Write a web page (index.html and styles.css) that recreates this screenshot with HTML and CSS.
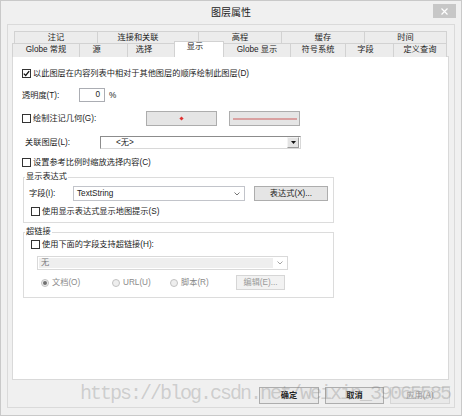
FILE: index.html
```html
<!DOCTYPE html>
<html lang="zh-CN">
<head>
<meta charset="utf-8">
<title>图层属性</title>
<link rel="stylesheet" href="styles.css">
</head>
<body>
<div class="window">
  <div class="titlebar">
    <span></span>
    <span class="title">图层属性</span>
    <span class="close"><svg width="7" height="7" viewBox="0 0 7 7"><path d="M0.5 0.5L6.5 6.5M6.5 0.5L0.5 6.5" stroke="#fff" stroke-width="1.2"/></svg></span>
  </div>
  <div class="panel">
    <div class="tabrow row1">
      <div class="tab">注记</div>
      <div class="tab shift-a">连接和关联</div>
      <div class="tab">高程</div>
      <div class="tab">缓存</div>
      <div class="tab">时间</div>
    </div>
    <div class="tabrow row2">
      <div class="tab">Globe 常规</div>
      <div class="tab shift-b">源</div>
      <div class="tab shift-b">选择</div>
      <div class="tab sel">显示</div>
      <div class="tab">Globe 显示</div>
      <div class="tab">符号系统</div>
      <div class="tab shift-c">字段</div>
      <div class="tab">定义查询</div>
    </div>
    <div class="page">
      <div class="row r1"><span class="cb on"><svg width="7" height="7" viewBox="0 0 7 7"><path d="M0.8 3.6L2.7 5.5L6.2 1.2" fill="none" stroke="#111" stroke-width="1.3"/></svg></span><span>以此图层在内容列表中相对于其他图层的顺序绘制此图层(D)</span></div>
      <div class="row r2"><span class="lbl-t">透明度(T):</span><span class="num">0</span><span class="pct">%</span></div>
      <div class="row r3"><span class="lbl-g"><span class="cb"></span><span>绘制注记几何(G):</span></span><span class="btn sym"><span class="dot"></span></span><span class="btn sym line"><span class="stroke"></span></span></div>
      <div class="row r4"><span class="lbl-l">关联图层(L):</span><span class="drop"><span class="drop-text">&lt;无&gt;</span><span class="drop-btn"><svg width="5" height="3" viewBox="0 0 5 3"><path d="M0 0H5L2.5 3Z" fill="#111"/></svg></span></span></div>
      <div class="row r5"><span class="cb"></span><span>设置参考比例时缩放选择内容(C)</span></div>
      <fieldset class="group g1">
        <legend>显示表达式</legend>
        <div class="row f1"><span class="lbl-f">字段(I):</span><span class="combo"><span class="combo-text">TextString</span><svg class="chev" width="6" height="4" viewBox="0 0 6 4"><path d="M0.5 0.5L3 3L5.5 0.5" fill="none" stroke="#666" stroke-width="0.9"/></svg></span><span class="btn expr">表达式(X)...</span></div>
        <div class="row f2"><span class="cb"></span><span>使用显示表达式显示地图提示(S)</span></div>
      </fieldset>
      <fieldset class="group g2">
        <legend>超链接</legend>
        <div class="row h1"><span class="cb"></span><span>使用下面的字段支持超链接(H):</span></div>
        <div class="row h2"><span class="combo off"><span class="combo-text">无</span><span class="combo-arrow"><svg width="6" height="4" viewBox="0 0 6 4"><path d="M0.5 0.5L3 3L5.5 0.5" fill="none" stroke="#999" stroke-width="0.9"/></svg></span></span></div>
        <div class="row h3">
          <span class="radio-item ri1"><span class="radio on"></span><span>文档(O)</span></span>
          <span class="radio-item ri2"><span class="radio"></span><span>URL(U)</span></span>
          <span class="radio-item ri3"><span class="radio"></span><span>脚本(R)</span></span>
          <span class="btn disabled edit">编辑(E)...</span>
        </div>
      </fieldset>
    </div>
    <div class="footer">
      <span class="btn foot strong">确定</span>
      <span class="btn foot strong">取消</span>
      <span class="btn foot disabled">应用(A)</span>
    </div>
  </div>
  <div class="watermark">https://blog.csdn.net/weixin_39065585</div>
</div>
</body>
</html>
```
FILE: styles.css
```css
* { box-sizing: border-box; }
body {
  margin: 0;
  background: #ffffff;
  font-family: "Liberation Sans", "Noto Sans CJK SC", sans-serif;
  font-size: 8.2px;
  line-height: 11px;
  color: #1c1c1c;
}
.window {
  position: relative;
  width: 462px;
  height: 416px;
  border: 1px solid #c9c9c9;
  background: #f0f0f0;
  overflow: hidden;
}
.titlebar {
  height: 23px;
  display: grid;
  grid-template-columns: 1fr auto 1fr;
  align-items: start;
}
.title {
  font-size: 10px;
  line-height: 12px;
  margin-top: 6px;
  color: #222;
}
.close {
  justify-self: end;
  width: 23px;
  height: 14px;
  margin-top: 3px;
  margin-right: 5px;
  background: #c7c7c7;
  display: flex;
  align-items: center;
  justify-content: center;
}
.panel {
  margin: 0 6px;
  height: 384px;
  border: 1px solid #dadada;
  padding: 6px 0 0 4px;
}
.tabrow { display: grid; }
.row1 {
  margin-left: 2px;
  height: 12px;
  grid-template-columns: 83px 101px 83px 83px 83px;
}
.row2 {
  height: 13px;
  grid-template-columns: 67px 48px 47px 49px 67px 55px 48px 54px;
}
.tab {
  border: 1px solid #d2d2d2;
  border-right: none;
  border-bottom: none;
  background: #ececec;
  text-align: center;
  line-height: 11px;
  white-space: nowrap;
  color: #1c1c1c;
}
.row2 .tab { line-height: 12px; }
.tab:last-child { border-right: 1px solid #d2d2d2; }
.tab.shift-a { padding-right: 20px; }
.tab.shift-b { padding-right: 14px; }
.tab.shift-c { padding-right: 8px; }
.tab.sel {
  position: relative;
  z-index: 1;
  align-self: start;
  height: 16px;
  margin-top: -2px;
  margin-right: -1px;
  border-right: 1px solid #d2d2d2;
  background: #ffffff;
  line-height: 9px;
  padding-right: 8px;
}
.page {
  width: 437px;
  height: 324px;
  background: #ffffff;
  border: 1px solid #d9d9d9;
  padding-left: 9px;
}
.row {
  display: flex;
  align-items: center;
  white-space: nowrap;
}
.cb {
  flex: none;
  width: 9px;
  height: 9px;
  border: 1px solid #333;
  background: #fff;
  margin-right: 2px;
  display: flex;
  align-items: center;
  justify-content: center;
}
.r1 { margin-top: 9px; height: 14px; }
.r2 { margin-top: 8px; height: 14px; }
.r3 { margin-top: 9px; height: 15px; }
.r4 { margin-top: 10px; height: 13px; }
.r5 { margin-top: 6px; height: 14px; }
.lbl-t { width: 57px; }
.num {
  width: 26px;
  height: 14px;
  border: 1px solid #abadb3;
  text-align: right;
  padding-right: 4px;
  line-height: 12px;
}
.pct { margin-left: 4px; }
.lbl-g { width: 124px; display: flex; align-items: center; }
.btn {
  flex: none;
  display: flex;
  align-items: center;
  justify-content: center;
  border: 1px solid #adadad;
  background: #e5e5e5;
  color: #1c1c1c;
}
.btn.sym { width: 71px; height: 15px; }
.btn.sym.line { margin-left: 12px; }
.dot {
  width: 3px;
  height: 3px;
  background: #e03232;
  transform: rotate(45deg);
}
.stroke {
  width: 64px;
  height: 2px;
  background: #d9a1a1;
}
.lbl-l { width: 75px; margin-left: 3px; }
.drop {
  width: 201px;
  height: 13px;
  border: 1px solid #8c8c8c;
  border-right-color: #d8d8d8;
  border-bottom-color: #d8d8d8;
  background: #fff;
  display: flex;
  align-items: center;
  justify-content: space-between;
}
.drop-text { margin-left: 15px; }
.drop-btn {
  width: 12px;
  height: 11px;
  border: 1px solid #9a9a9a;
  border-top-color: #f4f4f4;
  border-left-color: #f4f4f4;
  background: #e4e4e4;
  display: flex;
  align-items: center;
  justify-content: center;
  margin-right: 1px;
}
.group {
  margin: 0 0 0 1px;
  width: 311px;
  border: 1px solid #dcdcdc;
  padding: 0 5px;
  min-width: 0;
}
.group legend {
  margin-left: -4px;
  padding: 0 1px;
  line-height: 12px;
  color: #1c1c1c;
}
.g1 { margin-top: 2px; padding-top: 3px; padding-bottom: 4px; }
.g2 { margin-top: 3px; padding-top: 0; padding-bottom: 7px; }
.f1 { height: 15px; }
.lbl-f { width: 44px; }
.combo {
  flex: none;
  width: 172px;
  height: 15px;
  border: 1px solid #c2c4ca;
  background: #fff;
  display: flex;
  align-items: center;
  justify-content: space-between;
  padding: 0 4px 0 3px;
}
.btn.expr { width: 74px; height: 15px; margin-left: 9px; }
.f2 { margin-top: 3px; height: 14px; margin-left: 2px; }
.h1 { height: 13px; margin-left: 2px; }
.h2 { margin-top: 5px; height: 14px; margin-left: 8px; }
.combo.off {
  width: 251px;
  height: 14px;
  border-color: #d9d9d9;
  padding: 1px;
  color: #7a7a7a;
}
.combo.off .combo-text {
  flex: 1;
  height: 10px;
  background: #eeeeee;
  line-height: 10px;
  padding-left: 2px;
}
.combo-arrow {
  width: 13px;
  display: flex;
  justify-content: center;
}
.h3 { margin-top: 5px; height: 15px; margin-left: 12px; color: #8a8a8a; }
.radio-item { display: flex; align-items: center; }
.ri1 { width: 71px; }
.ri2 { width: 58px; }
.ri3 { width: 66px; }
.radio {
  width: 8px;
  height: 8px;
  border-radius: 50%;
  border: 1px solid #c2c2c2;
  background: #eeeeee;
  margin-right: 3px;
  display: flex;
  align-items: center;
  justify-content: center;
}
.radio.on::after {
  content: "";
  width: 4px;
  height: 4px;
  border-radius: 50%;
  background: #6f6f6f;
}
.btn.disabled {
  border-color: #d6d6d6;
  background: #f2f2f2;
  color: #9a9a9a;
}
.btn.edit { width: 49px; height: 15px; }
.footer {
  display: flex;
  justify-content: flex-end;
  gap: 6px;
  margin-top: 7px;
  padding-right: 4px;
}
.btn.foot { width: 60px; height: 17px; background: #e9e9e9; }
.btn.foot:nth-child(2) { width: 59px; }
.btn.strong { font-weight: bold; color: #222; }
.watermark {
  position: absolute;
  left: 79px;
  top: 381px;
  font-family: "Liberation Mono", monospace;
  font-size: 20px;
  letter-spacing: -2px;
  line-height: 24px;
  color: rgba(120, 120, 120, 0.3);
  white-space: nowrap;
  pointer-events: none;
}
```
